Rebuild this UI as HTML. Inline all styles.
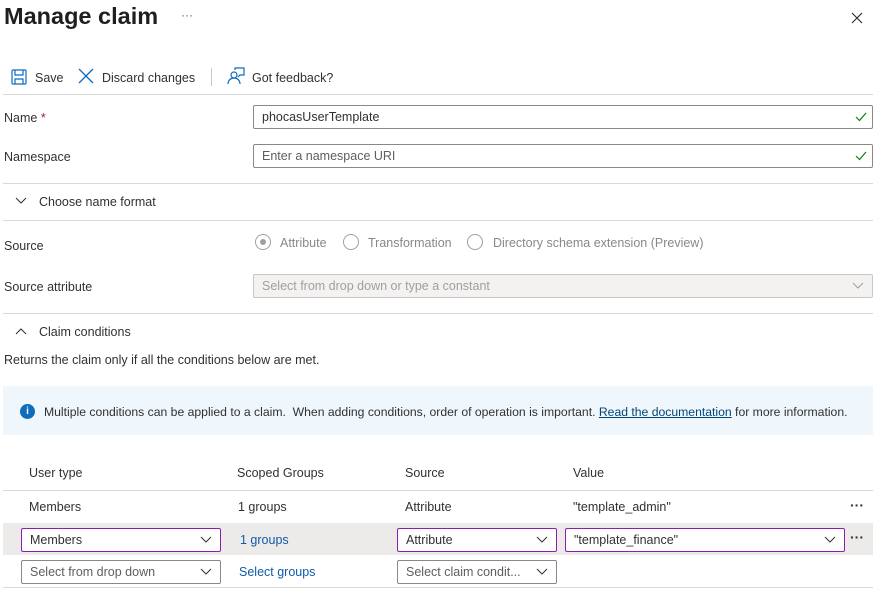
<!DOCTYPE html>
<html><head><meta charset="utf-8"><style>
*{margin:0;padding:0;box-sizing:border-box}
body{width:884px;height:593px;background:#fff;font-family:"Liberation Sans",sans-serif;font-size:12.5px;color:#323130;position:relative;overflow:hidden;letter-spacing:0}
.a{position:absolute;white-space:nowrap}
.t{margin-top:1px}
.hr{position:absolute;left:3px;width:870px;height:1px;background:#d8d8d8}
.box{position:absolute;border:1px solid #8a8886;border-radius:2px;height:24px;padding-left:8px;line-height:23px}
.sel{border-color:#8a1fb0}
.chev{position:absolute;right:8px;top:7px}
.link{color:#0f5aa8}
.dots{font-weight:bold;font-size:14px;letter-spacing:0}
</style></head><body>
<div class="a" style="left:4px;top:3px;font-size:23.5px;font-weight:bold;color:#201f1e;letter-spacing:0">Manage claim</div>
<div class="a" style="left:181px;top:8px;color:#605e5c;font-size:12px">···</div>
<svg class="a" style="left:851px;top:12px" width="12" height="12"><path d="M1 1L11 11M11 1L1 11" stroke="#323130" stroke-width="1.2"/></svg>

<svg class="a" style="left:11px;top:69px" width="16" height="16" fill="none" stroke="#0f6cbd" stroke-width="1.2"><rect x="1" y="1" width="14" height="14" rx="1"/><path d="M4 1v5h8V1M4 15v-5h8v5"/></svg>
<div class="a t" style="left:35px;top:70px">Save</div>
<svg class="a" style="left:78px;top:68px" width="16" height="16"><path d="M1 1L15 15M15 1L1 15" stroke="#0f6cbd" stroke-width="1.3"/></svg>
<div class="a t" style="left:102px;top:70px">Discard changes</div>
<div class="a" style="left:211px;top:68px;width:1px;height:18px;background:#c8c6c4"></div>
<svg class="a" style="left:227px;top:67px" width="18" height="18" fill="none" stroke="#0f6cbd" stroke-width="1.2"><circle cx="7" cy="8" r="3"/><path d="M1 17c0-4 3-6 6-6s6 2 6 6M8 3V1h9v7h-4l-2 2"/></svg>
<div class="a t" style="left:252px;top:70px">Got feedback?</div>
<div class="hr" style="top:94px"></div>

<div class="a t" style="left:4px;top:110px">Name <span style="color:#a4262c">*</span></div>
<div class="box" style="left:253px;top:105px;width:620px">phocasUserTemplate</div>
<svg class="a" style="left:855px;top:112px" width="12" height="10"><path d="M1 5l3.5 3.5L11 1" stroke="#107c10" stroke-width="1.2" fill="none"/></svg>
<div class="a t" style="left:4px;top:149px">Namespace</div>
<div class="box" style="left:253px;top:144px;width:620px;color:#605e5c">Enter a namespace URI</div>
<svg class="a" style="left:855px;top:151px" width="12" height="10"><path d="M1 5l3.5 3.5L11 1" stroke="#107c10" stroke-width="1.2" fill="none"/></svg>
<div class="hr" style="top:183px"></div>

<svg class="a" style="left:15px;top:197px" width="12" height="8"><path d="M1 1l5 5 5-5" stroke="#323130" fill="none"/></svg>
<div class="a t" style="left:39px;top:194px">Choose name format</div>
<div class="hr" style="top:220px"></div>

<div class="a t" style="left:4px;top:238px">Source</div>
<div class="a" style="left:255px;top:234px;width:16px;height:16px;border:1px solid #a19f9d;border-radius:50%"></div>
<div class="a" style="left:260px;top:239px;width:6px;height:6px;background:#a19f9d;border-radius:50%"></div>
<div class="a t" style="left:280px;top:235px;color:#8a8886">Attribute</div>
<div class="a" style="left:343px;top:234px;width:16px;height:16px;border:1px solid #a19f9d;border-radius:50%"></div>
<div class="a t" style="left:368px;top:235px;color:#8a8886">Transformation</div>
<div class="a" style="left:467px;top:234px;width:16px;height:16px;border:1px solid #a19f9d;border-radius:50%"></div>
<div class="a t" style="left:493px;top:235px;color:#8a8886">Directory schema extension (Preview)</div>

<div class="a t" style="left:4px;top:279px">Source attribute</div>
<div class="box" style="left:253px;top:274px;width:620px;background:#f3f2f1;border-color:#c8c6c4;color:#a19f9d">Select from drop down or type a constant<svg class="chev" width="12" height="8"><path d="M1 1l5 5 5-5" stroke="#a19f9d" fill="none"/></svg></div>
<div class="hr" style="top:313px"></div>

<svg class="a" style="left:15px;top:328px" width="12" height="8"><path d="M1 6l5-5 5 5" stroke="#323130" fill="none"/></svg>
<div class="a t" style="left:39px;top:324px">Claim conditions</div>
<div class="a t" style="left:4px;top:352px">Returns the claim only if all the conditions below are met.</div>

<div class="a" style="left:3px;top:386px;width:870px;height:49px;background:#eff6fc"></div>
<div class="a" style="left:20px;top:404px;width:15px;height:15px;border-radius:50%;background:#0f6cbd;color:#fff;font-size:10px;font-weight:bold;text-align:center;line-height:15px">i</div>
<div class="a t" style="left:44px;top:404px;font-size:12.2px;letter-spacing:0">Multiple conditions can be applied to a claim.&nbsp; When adding conditions, order of operation is important. <span style="color:#004578;text-decoration:underline">Read the documentation</span> for more information.</div>

<div class="a t" style="left:29px;top:465px">User type</div>
<div class="a t" style="left:237px;top:465px">Scoped Groups</div>
<div class="a t" style="left:405px;top:465px">Source</div>
<div class="a t" style="left:573px;top:465px">Value</div>
<div class="hr" style="top:490px"></div>

<div class="a t" style="left:29px;top:499px">Members</div>
<div class="a t" style="left:238px;top:499px">1 groups</div>
<div class="a t" style="left:405px;top:499px">Attribute</div>
<div class="a t" style="left:573px;top:499px">"template_admin"</div>
<div class="a dots" style="left:850px;top:497px">···</div>

<div class="a" style="left:3px;top:523px;width:870px;height:32px;background:#edebe9"></div>
<div class="box sel" style="left:21px;top:528px;width:200px;background:#fff">Members<svg class="chev" width="12" height="8"><path d="M1 1l5 5 5-5" stroke="#323130" fill="none"/></svg></div>
<div class="a link t" style="left:240px;top:532px">1 groups</div>
<div class="box sel" style="left:397px;top:528px;width:160px;background:#fff">Attribute<svg class="chev" width="12" height="8"><path d="M1 1l5 5 5-5" stroke="#323130" fill="none"/></svg></div>
<div class="box sel" style="left:565px;top:528px;width:280px;background:#fff">"template_finance"<svg class="chev" width="12" height="8"><path d="M1 1l5 5 5-5" stroke="#323130" fill="none"/></svg></div>
<div class="a dots" style="left:850px;top:529px">···</div>

<div class="box" style="left:21px;top:560px;width:200px;color:#605e5c">Select from drop down<svg class="chev" width="12" height="8"><path d="M1 1l5 5 5-5" stroke="#323130" fill="none"/></svg></div>
<div class="a link t" style="left:239px;top:564px">Select groups</div>
<div class="box" style="left:397px;top:560px;width:160px;color:#605e5c">Select claim condit...<svg class="chev" width="12" height="8"><path d="M1 1l5 5 5-5" stroke="#323130" fill="none"/></svg></div>
<div class="hr" style="top:587px"></div>
</body></html>
